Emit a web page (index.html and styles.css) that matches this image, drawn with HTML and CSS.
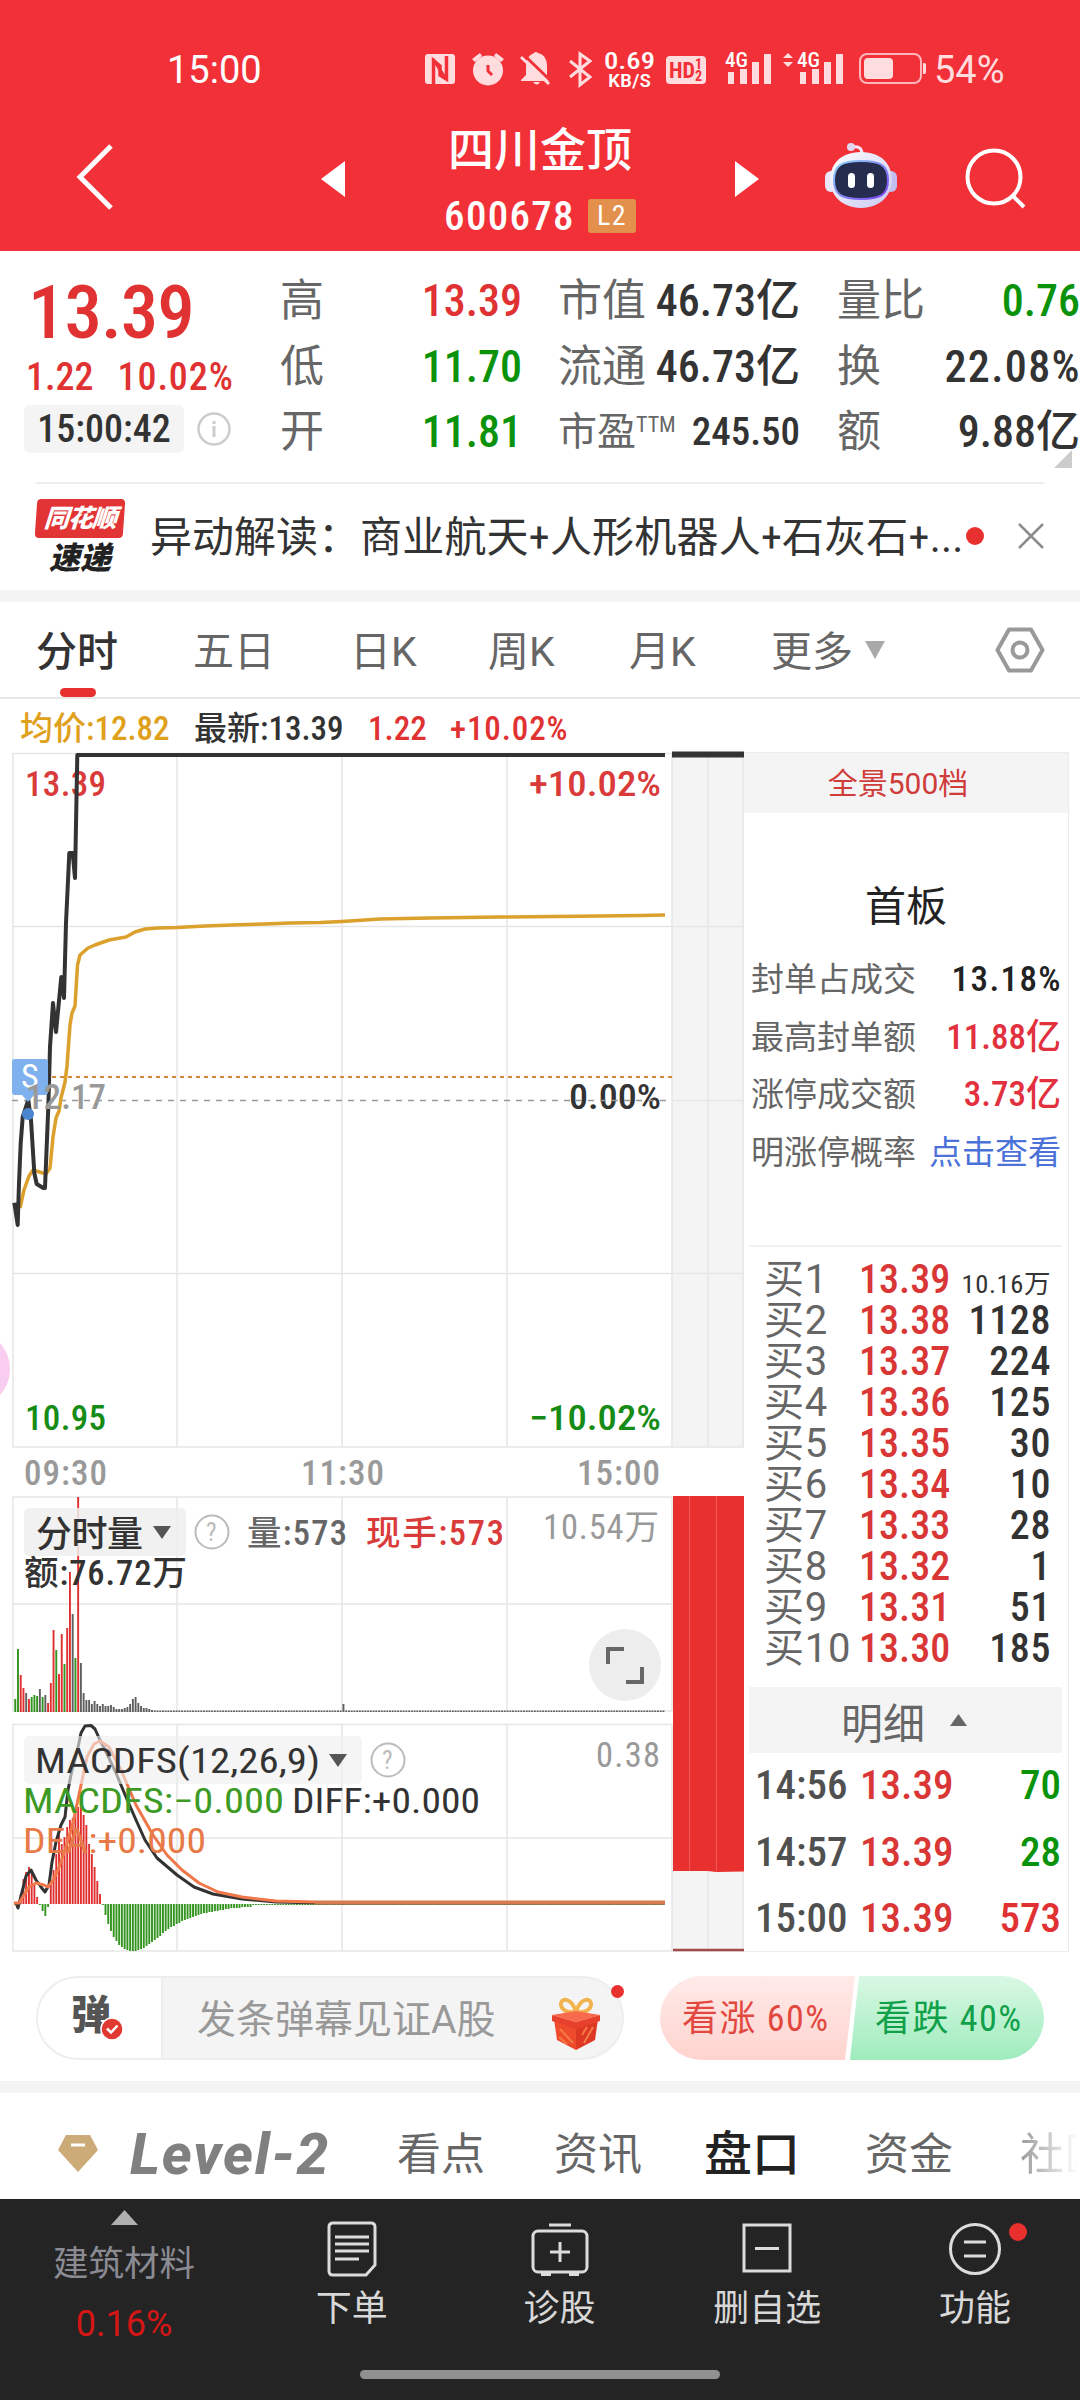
FILE: index.html
```html
<!DOCTYPE html>
<html lang="zh-CN">
<head>
    <meta charset="UTF-8">
    <meta name="viewport" content="width=device-width, initial-scale=1.0">
    <title>四川金顶 600678</title>
    <link rel="stylesheet" href="styles.css">
</head>
<body>
    <header class="header">
        <div class="status">
            <span class="status-time">15:00</span>
            <svg class="status-icons" width="504" height="40" viewBox="424 50 504 40">
                <g fill="#ffdcde">
                    <rect x="425" y="54" width="30" height="30" rx="3"/>
                    <path d="M472 59l8-6 2 3-7 6zM504 59l-8-6-2 3 7 6z"/>
                    <circle cx="488" cy="70.500" r="15"/>
                    <path d="M534 53q2-2 4 0 9 2 9 13v10l4 4v1h-30v-1l5-5v-9q0-10 8-13zM533 82h7q-3 5-7 0z"/>
                    <rect x="666" y="56" width="40" height="28" rx="4"/>
                    <path d="M728 72h6v12h-6zM740 69h7v15h-7zM752 62h7v22h-7zM764 54h7v30h-7z"/>
                    <path d="M800 72h6v12h-6zM812 69h7v15h-7zM824 62h7v22h-7zM836 54h7v30h-7z"/>
                    <path d="M783 58l5-5 5 5zM783 62l5 5 5-5z"/>
                    <rect x="864" y="58" width="29" height="21" rx="4"/>
                    <path d="M923 63h1.500q1.500 0 1.500 2v7q0 2-1.500 2h-1.500z"/>
                </g>
                <path d="M433.500 84V60.500L440 66V75L446.500 79V56" fill="none" stroke="#f23038" stroke-width="3.500"/>
                <path d="M433 59l13 20" stroke="#f23038" stroke-width="3"/>
                <path d="M488 65v6l4 4" fill="none" stroke="#f23038" stroke-width="3"/>
                <path d="M524 55l28 27" stroke="#f23038" stroke-width="3"/>
                <path d="M521 57l28 27" stroke="#ffdcde" stroke-width="3"/>
                <path d="M570 61l20 16-10 8V54l10 7-20 16" fill="none" stroke="#ffdcde" stroke-width="3"/>
                <rect x="860" y="54" width="61" height="29" rx="7" fill="none" stroke="#ffb6ba" stroke-width="2"/>
                <g class="status-text">
                    <text x="604" y="69" font-size="24" textLength="51" lengthAdjust="spacingAndGlyphs">0.69</text>
                    <text x="608" y="86.500" font-size="19" textLength="43" lengthAdjust="spacingAndGlyphs">KB/S</text>
                    <text x="725" y="67" font-size="20" textLength="23" lengthAdjust="spacingAndGlyphs">4G</text>
                    <text x="797" y="67" font-size="20" textLength="23" lengthAdjust="spacingAndGlyphs">4G</text>
                </g>
                <g class="status-text status-hd">
                    <text x="669" y="78" font-size="22" textLength="26" lengthAdjust="spacingAndGlyphs">HD</text>
                    <text x="695" y="69" font-size="14">1</text>
                    <text x="695" y="81" font-size="14">2</text>
                </g>
            </svg>
            <span class="status-battery">54%</span>
        </div>
        <div class="titlebar">
            <svg class="back" width="40" height="68" viewBox="0 0 40 68"><path d="M36 3L5 34l31 31" fill="none" stroke="#fff" stroke-width="5"/></svg>
            <svg class="prev" width="24" height="36" viewBox="0 0 24 36"><path d="M24 0v36L0 18z" fill="#fff"/></svg>
            <div class="stock">
                <h1 class="stock-name">四川金顶</h1>
                <div class="stock-code">600678 <span class="badge-l2">L2</span></div>
            </div>
            <svg class="next" width="24" height="36" viewBox="0 0 24 36"><path d="M0 0v36l24-18z" fill="#fff"/></svg>
            <svg class="robot" width="72" height="68" viewBox="0 0 72 68">
                <defs>
                    <linearGradient id="shell" x1="0" y1="0" x2="1" y2="1"><stop offset="0" stop-color="#fff"/><stop offset="1" stop-color="#c9c8f2"/></linearGradient>
                    <linearGradient id="rim" x1="0" y1="0" x2="1" y2="1"><stop offset="0" stop-color="#8fd6f5"/><stop offset="1" stop-color="#7a3ff0"/></linearGradient>
                </defs>
                <path d="M26 5q11-2 11 7" fill="none" stroke="#f3e6f6" stroke-width="3"/>
                <circle cx="26" cy="5" r="4" fill="#e3d7f0"/>
                <rect x="0" y="29" width="12" height="21" rx="6" fill="#e9e8fb"/>
                <rect x="60" y="29" width="12" height="21" rx="6" fill="#c2bff0"/>
                <path d="M36 10c22 0 31 14 31 28S56 66 36 66 5 52 5 38s9-28 31-28z" fill="url(#shell)"/>
                <path d="M36 19c19 0 27 4 27 19s-8 19-27 19S9 53 9 38s8-19 27-19z" fill="#252c4e" stroke="url(#rim)" stroke-width="2"/>
                <rect x="23" y="31" width="7" height="15" rx="3.500" fill="#fff"/>
                <rect x="42" y="31" width="7" height="15" rx="3.500" fill="#fff"/>
            </svg>
            <svg class="search" width="62" height="62" viewBox="0 0 62 62" fill="none" stroke="#fff" stroke-width="4"><circle cx="29" cy="30" r="26.500"/><path d="M48 49l11 11"/></svg>
        </div>
    </header>

    <section class="quote">
        <div class="quote-main">
            <div class="price red">13.39</div>
            <div class="change red"><span>1.22</span><span>10.02%</span></div>
            <div class="time-row">
                <span class="time-pill">15:00:42</span>
                <svg width="34" height="34" viewBox="0 0 34 34"><circle cx="17" cy="17" r="15.500" fill="none" stroke="#ccc" stroke-width="2.500"/><path d="M17 14v11M17 9v3" stroke="#ccc" stroke-width="3"/></svg>
            </div>
        </div>
        <dl class="quote-col col-price">
            <div><dt>高</dt><dd class="red">13.39</dd></div>
            <div><dt>低</dt><dd class="green">11.70</dd></div>
            <div><dt>开</dt><dd class="green">11.81</dd></div>
        </dl>
        <dl class="quote-col col-cap">
            <div><dt>市值</dt><dd>46.73亿</dd></div>
            <div><dt>流通</dt><dd>46.73亿</dd></div>
            <div class="pe"><dt>市盈<sup>TTM</sup></dt><dd>245.50</dd></div>
        </dl>
        <dl class="quote-col col-volume">
            <div><dt>量比</dt><dd class="green">0.76</dd></div>
            <div><dt>换</dt><dd class="wide">22.08%</dd></div>
            <div><dt>额</dt><dd>9.88亿</dd></div>
        </dl>
        <svg class="quote-more" width="18" height="18" viewBox="0 0 18 18"><path d="M18 0v18H0z" fill="#ccc"/></svg>
    </section>

    <section class="news">
        <div class="news-logo">
            <span class="news-brand">同花顺</span>
            <span class="news-sub">速递</span>
        </div>
        <span class="news-text">异动解读：<b>商业航天+人形机器人+石灰石+...</b></span>
        <i class="dot news-dot"></i>
        <svg class="news-close" width="26" height="26" viewBox="0 0 26 26"><path d="M1 1l24 24M25 1L1 25" stroke="#8c8c8c" stroke-width="2.500"/></svg>
    </section>

    <nav class="periods">
        <a class="period active">分时</a>
        <a class="period">五日</a>
        <a class="period">日K</a>
        <a class="period">周K</a>
        <a class="period">月K</a>
        <a class="period">更多<svg class="caret" width="22" height="18" viewBox="0 0 22 18"><path d="M1 0h20L11 18z" fill="#a9a9a9"/></svg></a>
        <svg class="hexagon" width="50" height="46" viewBox="0 0 50 46" fill="none" stroke="#999" stroke-width="4" stroke-linejoin="round"><path d="M14 2.500h22l11.500 20.500L36 43.500H14L2.500 23z"/><circle cx="25" cy="23" r="7.500"/></svg>
    </nav>

    <div class="legend">
        <span class="gold">均价:12.82</span>
        <span>最新:13.39</span>
        <span class="red">1.22</span>
        <span class="red">+10.02%</span>
    </div>

    <main class="board">
        <svg class="chart" width="744" height="1202" viewBox="0 750 744 1202">
            <!-- after-hours strip -->
            <path d="M672 753h72v694h-72zM672 1871h72v81h-72z" fill="#f4f4f4"/>
            <g stroke="#e6e6e6" stroke-width="1.500" fill="none">
                <path d="M12 753.500H744M12 926.500H744M672 1100.500H744M12 1273.500H744M12 1447H744"/>
                <path d="M13 753V1447M177 753V1447M342 753V1447M507 753V1447M672 753V1447M708 753V1447M743 753V1447"/>
                <path d="M12 1497H672M12 1604H672M12 1711H672M13 1497V1711M177 1497V1711M342 1497V1711M507 1497V1711M672 1497V1711"/>
                <path d="M12 1724.500H672M12 1838H672M12 1951H744M13 1724V1951M177 1724V1951M342 1724V1951M507 1724V1951M672 1724V1951M708 1871V1951M743 1871V1951"/>
            </g>
            <circle cx="-29" cy="1369" r="39" fill="#f9cdf0"/>

            <g class="axis">
                <text x="25" y="796" class="red" textLength="81">13.39</text>
                <text x="529" y="796" class="red" textLength="132" lengthAdjust="spacingAndGlyphs">+10.02%</text>
                <text x="569" y="1109" fill="#333" textLength="92" lengthAdjust="spacingAndGlyphs">0.00%</text>
                <text x="25" y="1430" class="green" textLength="81">10.95</text>
                <text x="529" y="1430" class="green" textLength="132" lengthAdjust="spacingAndGlyphs">−10.02%</text>
                <text x="24" y="1485" textLength="83">09:30</text>
                <text x="301" y="1485" textLength="83">11:30</text>
                <text x="577" y="1485" textLength="83">15:00</text>
            </g>

            <path d="M12 1077H672" stroke="#d8873c" stroke-width="2" stroke-dasharray="4 4"/>
            <path d="M12 1100.500H666" stroke="#999" stroke-width="1.500" stroke-dasharray="6 6"/>
            <polyline fill="none" stroke="#dca02c" stroke-width="3.500" stroke-linejoin="round" points="20,1208 24,1190 29,1176 33,1170 46,1174 50,1168 53,1137 56,1118 59,1111 61,1098 65,1082 67,1066 70,1025 72,1013 75,1006 77.500,965 80,955 88,948 95,945 109,940 126,937 135,932 145,929 158,928 177,927.500 205,926 232,925 265,924 290,923 320,922.500 342,921.500 380,919 430,918 500,917 600,916 640,915.500 665,915"/>
            <polyline fill="none" stroke="#333" stroke-width="4" stroke-linejoin="round" points="14.300,1202.700 17.700,1225 19,1183 20.700,1143 22.700,1117 28.300,1100 31,1120 34.300,1173 36.700,1184 43.300,1188 45,1188 48.300,1107 50,1047 53,1003 56,1032 61.300,977 64,998 66,923 69.300,853 72.700,853 75,878 77.300,755 665,755"/>
            <path d="M672 754.500H744" stroke="#333" stroke-width="6"/>
            <circle cx="28" cy="1114" r="6" fill="#4a86d0"/>
            <path d="M15 1059h30q3 0 3 3v30q0 3-3 3H34l-6 7-6-7H15q-3 0-3-3v-30q0-3 3-3z" fill="#7fb1ee"/>
            <text x="21" y="1088" class="mark">S</text>
            <text x="26" y="1109" class="axis" textLength="80">12.17</text>

            <g id="volume"></g>
            <path d="M673 1496h71v375.500l-27 .5-10-1h-34z" fill="#e8302f"/>
            <path d="M689.500 1496V1871M716.500 1496V1871" stroke="#ee5a58"/>
            <path d="M673 1950H744" stroke="#a04a4a" stroke-width="2.500"/>
            <rect x="24" y="1508" width="162" height="48" rx="5" fill="#eee" fill-opacity=".85"/>
            <g class="tag">
                <text x="36" y="1547" font-size="36" fill="#333" textLength="107">分时量</text>
                <path d="M153 1526h18l-9 13z" fill="#555"/>
                <circle cx="212" cy="1532" r="16.500" fill="none" stroke="#bbb" stroke-width="2"/>
                <text x="206" y="1541" class="help">?</text>
                <text x="247" y="1545" fill="#666" textLength="100">量:573</text>
                <text x="366" y="1545" class="red" textLength="138">现手:573</text>
                <text x="543" y="1539" class="scale" textLength="116">10.54万</text>
                <text x="24" y="1585" fill="#333" textLength="163">额:76.72万</text>
            </g>
            <circle cx="625" cy="1665" r="36" fill="#ededed"/>
            <path d="M608 1664v-15h16M626 1682h16v-15" fill="none" stroke="#666" stroke-width="4"/>

            <g id="macd"></g>
            <g fill="none" stroke-width="3" stroke-linejoin="round">
                <polyline stroke="#333" points="16,1903 18,1908 22,1892 26,1876 31,1870 36,1880 41,1887 45,1892 49,1885 52,1862 56,1842 61,1825 65,1817 68,1790 72,1770 77,1752 81,1733 85,1726 91,1725.500 95,1729 99,1738 107,1754 116,1773 126,1797 136,1820 145,1840 157,1858 177,1875 194,1887 213,1894 242,1899 276,1902 320,1903 665,1903"/>
                <polyline stroke="#f0774a" points="14,1903 19,1903 24,1895 29,1887 36,1883 44,1885 48,1887 53,1880 58,1870 65,1850 73,1823 80,1790 87,1757 94,1744 100,1741 109,1747 121,1770 136,1805 153,1835 167,1855 182,1870 199,1883 218,1892 242,1897 276,1901 315,1902"/>
                <path d="M315 1902.500H665" stroke="#d87a50" stroke-width="4"/>
            </g>
            <rect x="24" y="1736" width="338" height="48" rx="5" fill="#eee" fill-opacity=".6"/>
            <g class="tag tag-macd">
                <text x="35" y="1773" fill="#333" textLength="285" lengthAdjust="spacingAndGlyphs">MACDFS(12,26,9)</text>
                <path d="M329 1754h18l-9 13z" fill="#555"/>
                <circle cx="388" cy="1760" r="16.500" fill="none" stroke="#bbb" stroke-width="2"/>
                <text x="382" y="1769" class="help">?</text>
                <text x="596" y="1767" fill="#999" textLength="64">0.38</text>
                <text x="23" y="1813" fill="#3c9a25" textLength="261" lengthAdjust="spacingAndGlyphs">MACDFS:−0.000</text>
                <text x="292" y="1813" fill="#333" textLength="188" lengthAdjust="spacingAndGlyphs">DIFF:+0.000</text>
                <text x="23" y="1853" fill="#e87a48" textLength="183" lengthAdjust="spacingAndGlyphs">DEA:+0.000</text>
            </g>
        </svg>

        <aside class="depth">
            <div class="depth-head">全景500档</div>
            <div class="depth-title">首板</div>
            <div class="facts">
                <div><span>封单占成交</span><b class="wide">13.18%</b></div>
                <div><span>最高封单额</span><b class="crimson">11.88亿</b></div>
                <div><span>涨停成交额</span><b class="crimson">3.73亿</b></div>
                <div><span>明涨停概率</span><a class="link">点击查看</a></div>
            </div>
            <div class="orders">
                <div><span>买1</span><b>13.39</b><em class="small">10.16万</em></div>
                <div><span>买2</span><b>13.38</b><em>1128</em></div>
                <div><span>买3</span><b>13.37</b><em>224</em></div>
                <div><span>买4</span><b>13.36</b><em>125</em></div>
                <div><span>买5</span><b>13.35</b><em>30</em></div>
                <div><span>买6</span><b>13.34</b><em>10</em></div>
                <div><span>买7</span><b>13.33</b><em>28</em></div>
                <div><span>买8</span><b>13.32</b><em>1</em></div>
                <div><span>买9</span><b>13.31</b><em>51</em></div>
                <div><span>买10</span><b>13.30</b><em>185</em></div>
            </div>
            <div class="detail-head">明细<svg width="17" height="12" viewBox="0 0 17 12"><path d="M8.500 0L17 12H0z" fill="#666"/></svg></div>
            <div class="ticks">
                <div><span>14:56</span><b>13.39</b><em class="green">70</em></div>
                <div><span>14:57</span><b>13.39</b><em class="green">28</em></div>
                <div><span>15:00</span><b>13.39</b><em class="red">573</em></div>
            </div>
        </aside>
    </main>

    <section class="social">
        <div class="danmu">
            <div class="danmu-toggle">
                <span>弹</span>
                <svg class="danmu-check" width="24" height="24" viewBox="0 0 24 24"><circle cx="12" cy="12" r="11" fill="#e0392f" stroke="#fff" stroke-width="1.500"/><path d="M7 11.500l4 4 6.500-7" fill="none" stroke="#fff" stroke-width="2.500"/></svg>
            </div>
            <div class="danmu-input">发条弹幕见证A股</div>
            <svg class="gift" width="50" height="53" viewBox="0 0 50 53">
                <path d="M25 15C20-1 9 1 10 8c1 6 8 8 15 7 7 1 14-1 15-7 1-7-10-9-15 7z" fill="none" stroke="#f2b24c" stroke-width="4"/>
                <path d="M3 22l22 8v23L6 43z" fill="#ee4a2c"/>
                <path d="M47 22l-22 8v23l19-10z" fill="#dc3823"/>
                <path d="M1 18l24-4 24 4-24 7z" fill="#f76a4c"/>
                <path d="M1 18l24 7 24-7v6l-24 8-24-8z" fill="#e8412b"/>
                <path d="M9 32l13 14M8 40l8 7M33 46l9-16M31 38l5-8" stroke="#f57a45" stroke-width="2"/>
            </svg>
            <i class="dot danmu-dot"></i>
        </div>
        <div class="vote">
            <div class="vote-up">看涨 60%</div>
            <div class="vote-down">看跌 40%</div>
        </div>
    </section>

    <nav class="tabs">
        <svg class="gem" width="42" height="37" viewBox="0 0 42 37"><path d="M9 0h24l8 15-20 22L1 15z" fill="#cdab78"/><path d="M14 10h14" stroke="#fff" stroke-width="3"/></svg>
        <a class="level2">Level-2</a>
        <a class="tab">看点</a>
        <a class="tab">资讯</a>
        <a class="tab active">盘口</a>
        <a class="tab">资金</a>
        <a class="tab faded">社区</a>
    </nav>

    <footer class="bottom">
        <div class="bottom-nav">
            <div class="sector">
                <svg width="27" height="15" viewBox="0 0 27 15"><path d="M13.500 0L27 15H0z" fill="#b0b0b0"/></svg>
                <span class="sector-name">建筑材料</span>
                <span class="sector-change">0.16%</span>
            </div>
            <div class="action">
                <svg width="60" height="56" viewBox="0 0 60 56" fill="none" stroke="#dcdcdc" stroke-width="3"><path d="M11 2h38q4 0 4 4v38l-9 10H11q-4 0-4-4V6q0-4 4-4z"/><path d="M13 16h34M13 23h34M13 30h34M13 38h24"/></svg>
                <span>下单</span>
            </div>
            <div class="action">
                <svg width="60" height="56" viewBox="0 0 60 56" fill="none" stroke="#dcdcdc" stroke-width="3"><path d="M19 4h22"/><rect x="3" y="10" width="54" height="41" rx="5"/><path d="M30 21v20M20 31h20M11 53.500h10M39 53.500h10"/></svg>
                <span>诊股</span>
            </div>
            <div class="action">
                <svg width="60" height="56" viewBox="0 0 60 56" fill="none" stroke="#dcdcdc" stroke-width="3"><rect x="7" y="4" width="46" height="46"/><path d="M18 27.500h24"/></svg>
                <span>删自选</span>
            </div>
            <div class="action">
                <svg width="60" height="56" viewBox="0 0 60 56" fill="none" stroke="#dcdcdc" stroke-width="3"><circle cx="30" cy="28" r="24.500"/><path d="M19 21h22M19 35h22"/></svg>
                <span>功能</span>
                <i class="dot action-dot"></i>
            </div>
        </div>
        <div class="home-bar"></div>
    </footer>

    <script src="chart.js"></script>
</body>
</html>
```
FILE: styles.css
```css
* {
    box-sizing: border-box;
}
body {
    margin: 0;
    width: 1080px;
    height: 2400px;
    overflow: hidden;
    background: #fff;
    color: #333;
    font-family: Roboto, "Noto Sans CJK SC", sans-serif;
    font-stretch: 75%;
}
svg {
    display: block;
    flex: none;
}
h1, dl, dd {
    margin: 0;
}
i, em {
    font-style: normal;
}
.red {
    color: #e03232;
    fill: #d93a3a;
}
.green {
    color: #0a930a;
    fill: #168c16;
}
.dot {
    display: block;
    width: 18px;
    height: 18px;
    border-radius: 50%;
    background: #e8302f;
}

/* header */
.header {
    height: 251px;
    background: #f23038;
    color: #fff;
}
.status {
    display: flex;
    align-items: center;
    height: 100px;
    padding: 40px 0 0 167px;
    font-size: 38px;
    line-height: 60px;
    font-stretch: 100%;
}
.status-time {
    width: 257px;
}
.status-battery {
    margin-left: 6px;
    color: #ffdcde;
}
.status-icons {
    font-stretch: 75%;
}
.status-text {
    fill: #fff;
    font-weight: 500;
}
.status-hd {
    fill: #f23038;
    font-weight: 700;
}
.titlebar {
    display: flex;
    align-items: flex-start;
    height: 150px;
    padding: 23px 0 0 75px;
}
.back {
    margin-top: 20px;
}
.prev {
    margin: 38px 0 0 206px;
}
.stock {
    width: 390px;
    text-align: center;
}
.stock-name {
    font-size: 46px;
    font-weight: 500;
    line-height: 54px;
}
.stock-code {
    display: flex;
    justify-content: center;
    align-items: center;
    height: 48px;
    margin-top: 15px;
    font-size: 41px;
    font-weight: 500;
    letter-spacing: 1.3px;
}
.badge-l2 {
    width: 48px;
    height: 34px;
    margin-left: 13px;
    border-radius: 3px;
    background: #e2904c;
    font-size: 28px;
    font-weight: 400;
    line-height: 34px;
}
.next {
    margin-top: 38px;
}
.robot {
    margin: 19px 0 0 66px;
}
.search {
    margin: 24px 0 0 68px;
}

/* quote */
.quote {
    position: relative;
    display: flex;
    height: 231px;
    padding-top: 18px;
}
.quote-main {
    width: 280px;
    padding-left: 24px;
}
.price {
    height: 88px;
    padding-left: 4px;
    font-size: 75px;
    font-weight: 500;
    line-height: 86px;
    letter-spacing: -1px;
}
.change {
    display: flex;
    gap: 24px;
    padding-left: 2px;
    font-size: 38px;
    font-weight: 500;
    line-height: 41px;
}
.change span + span {
    letter-spacing: 0.9px;
}
.time-row {
    display: flex;
    align-items: center;
    gap: 13px;
    margin-top: 7px;
}
.time-pill {
    width: 160px;
    height: 48px;
    border-radius: 6px;
    background: #f4f4f4;
    font-size: 38px;
    font-weight: 500;
    line-height: 48px;
    text-align: center;
}
.quote-col > div {
    display: flex;
    justify-content: space-between;
    height: 65.5px;
    line-height: 65px;
    font-size: 44px;
}
.quote-col dt {
    color: #666;
}
.quote-col dd {
    font-weight: 500;
    white-space: nowrap;
}
.quote-col .wide {
    letter-spacing: 1.4px;
    margin-right: -1px;
}
.col-price {
    width: 242px;
}
.col-cap {
    width: 242px;
    margin-left: 36px;
}
.col-volume {
    width: 243px;
    margin-left: 37px;
}
.quote-col .pe {
    font-size: 39px;
}
.pe sup {
    font-size: 22px;
    line-height: 0;
    vertical-align: 13px;
}
.quote-more {
    position: absolute;
    right: 8px;
    bottom: 14px;
}

/* news */
.news {
    display: flex;
    align-items: center;
    height: 108px;
    margin: 0 36px;
    border-top: 2px solid #ededed;
}
.news-logo {
    width: 88px;
    height: 76px;
    margin-right: 26px;
    text-align: center;
    font-weight: 900;
    font-style: italic;
}
.news-brand {
    display: block;
    height: 39px;
    border-radius: 4px;
    background: #e23434;
    color: #fff;
    font-size: 25px;
    line-height: 40px;
    letter-spacing: -1px;
    transform: skewX(-4deg);
}
.news-sub {
    display: block;
    color: #222;
    font-size: 31px;
    line-height: 42px;
}
.news-text {
    width: 816px;
    font-size: 42px;
    line-height: 61px;
    white-space: nowrap;
}
.news-text b {
    font-weight: 400;
    letter-spacing: 0.2px;
}
.news-dot {
    margin-bottom: 2px;
}
.news-close {
    margin: 0 0 2px 34px;
}

/* period tabs */
.periods {
    display: flex;
    align-items: center;
    height: 109px;
    padding-left: 36px;
    border-top: 12px solid #f4f4f4;
    border-bottom: 2px solid #e8e8e8;
    color: #666;
    font-size: 41px;
}
.period {
    position: relative;
    display: flex;
    align-items: center;
    width: 157px;
    height: 95px;
    padding-top: 5px;
    line-height: 90px;
}
.period.active {
    color: #333;
    font-weight: 500;
}
.period.active::after {
    content: "";
    position: absolute;
    left: 24px;
    bottom: 0;
    width: 36px;
    height: 9px;
    border-radius: 5px;
    background: #e8302f;
}
.period:nth-child(3), .period:nth-child(4), .period:nth-child(5) {
    font-stretch: 100%;
}
.period:nth-child(3) {
    width: 138px;
}
.period:nth-child(4) {
    width: 141px;
}
.period:nth-child(5) {
    width: 142px;
}
.period:nth-child(6) {
    width: 224px;
}
.caret {
    margin: -4px 0 0 11px;
}
.legend {
    display: flex;
    height: 51px;
    padding-left: 20px;
    font-size: 33px;
    font-weight: 500;
    line-height: 59px;
}
.legend span {
    width: 174px;
}
.legend span:nth-child(3) {
    width: 82px;
}
.legend span:nth-child(4) {
    letter-spacing: 0.9px;
}
.gold {
    color: #dfa01c;
}

/* chart */
.board {
    display: flex;
    height: 1202px;
}
.axis {
    fill: #999;
    font-size: 35px;
    font-weight: 500;
}
.mark {
    fill: #fff;
    font-size: 34px;
}
.tag {
    font-size: 34.5px;
    font-weight: 500;
}
.tag-macd {
    font-weight: 400;
}
.help {
    fill: #bbb;
    font-size: 25px;
    font-weight: 400;
}
.scale {
    fill: #999;
    font-weight: 400;
}
.bar-up {
    fill: #e02f2f;
}
.bar-down {
    fill: #33941f;
}
.bar-flat {
    fill: #5f5f5f;
}

/* order book */
.depth {
    width: 325px;
    margin-top: 2px;
    border: 1px solid #ececec;
    border-left: 0;
}
.depth-head {
    height: 60px;
    padding-right: 16px;
    background: #f4f4f4;
    color: #d03c3a;
    font-size: 30px;
    font-stretch: 100%;
    line-height: 61px;
    text-align: center;
}
.depth-title {
    padding-top: 64px;
    color: #222;
    font-size: 41px;
    line-height: 60px;
    text-align: center;
}
.facts {
    height: 308px;
    padding: 14px 7px 0;
}
.facts div {
    display: flex;
    justify-content: space-between;
    color: #666;
    font-size: 33px;
    line-height: 57.6px;
    white-space: nowrap;
}
.facts b {
    color: #222;
    font-size: 35px;
    font-weight: 500;
}
.facts .wide {
    margin-right: -1px;
    letter-spacing: 1.4px;
}
.facts .crimson {
    color: #e2303e;
}
.facts .link {
    color: #4a72d8;
}
.orders {
    margin: 0 6px 0 5px;
    padding-top: 12px;
    height: 442px;
    border-top: 2px solid #f2f2f2;
}
.orders div, .ticks div {
    display: flex;
    height: 41px;
    padding: 0 11px 0 15px;
    font-size: 40px;
    font-weight: 500;
    line-height: 41px;
}
.orders span {
    width: 95px;
    color: #666;
    font-weight: 400;
    font-stretch: 100%;
    letter-spacing: 0.8px;
    white-space: nowrap;
}
.orders b, .ticks b {
    font-weight: 500;
    color: #d93636;
}
.orders em, .ticks em {
    flex: 1;
    text-align: right;
}
.orders em {
    letter-spacing: 0.6px;
}
.orders .small {
    font-size: 26.5px;
    font-weight: 400;
    line-height: 50px;
}
.detail-head {
    display: flex;
    align-items: center;
    height: 66px;
    margin: 0 6px 0 5px;
    padding-left: 92px;
    background: #f4f4f4;
    color: #666;
    font-size: 42px;
}
.detail-head svg {
    margin-left: 25px;
}
.ticks div {
    height: 66.7px;
    padding: 0 7px 0 11px;
    font-size: 41px;
    line-height: 65px;
}
.ticks span {
    width: 105px;
    color: #505050;
}

/* comment box and vote */
.social {
    display: flex;
    justify-content: space-between;
    height: 141px;
    padding: 24px 36px 0;
    border-bottom: 12px solid #f4f4f4;
}
.danmu {
    position: relative;
    display: flex;
    align-items: center;
    width: 588px;
    height: 84px;
    border: 2px solid #eee;
    border-radius: 42px;
    background: linear-gradient(90deg, #fff 123px, #eee 123px, #eee 125px, #f4f4f4 125px);
}
.danmu-toggle {
    position: relative;
    width: 124px;
    padding: 0 0 4px 33px;
    color: #555;
    font-size: 40px;
    font-weight: 900;
    line-height: 76px;
}
.danmu-check {
    position: absolute;
    left: 62px;
    top: 39px;
}
.danmu-input {
    width: 352px;
    padding: 4px 0 0 35px;
    color: #999;
    font-size: 39px;
    line-height: 80px;
    font-stretch: 100%;
    white-space: nowrap;
}
.gift {
    margin: 10px 0 0 37px;
}
.danmu-dot {
    position: absolute;
    right: -2px;
    top: 7px;
    width: 13px;
    height: 13px;
}
.vote {
    display: flex;
    width: 384px;
    height: 84px;
    border-radius: 42px;
    overflow: hidden;
    font-size: 36px;
    line-height: 86px;
    letter-spacing: 1.5px;
    white-space: pre;
}
.vote-up {
    width: 195px;
    padding-left: 22px;
    background: linear-gradient(#ffebe9, #fed3ce);
    color: #e2483f;
    clip-path: polygon(0 0, 100% 0, 185px 100%, 0 100%);
}
.vote-down {
    width: 194px;
    margin-left: -5px;
    padding-left: 25px;
    background: linear-gradient(#d9f8e4, #9fecbd);
    color: #11a04a;
    clip-path: polygon(9px 0, 100% 0, 100% 100%, 0 100%);
}

/* section tabs */
.tabs {
    display: flex;
    align-items: center;
    height: 106px;
    padding: 18px 0 0 57px;
    overflow: hidden;
    color: #666;
    font-size: 44px;
    line-height: 86px;
    white-space: nowrap;
}
.gem {
    margin-bottom: 4px;
}
.level2 {
    width: 266px;
    margin-left: 31px;
    color: #808080;
    font-size: 57px;
    font-style: italic;
    font-stretch: 100%;
    font-weight: 800;
    line-height: 82px;
    letter-spacing: 1.8px;
}
.tab {
    flex: none;
    width: 157px;
}
.tab:nth-child(3) {
    margin-left: 1px;
}
.tab:nth-child(4) {
    width: 150px;
}
.tab.active {
    width: 161px;
    color: #222;
    font-size: 48px;
    font-weight: 500;
}
.tab.faded {
    width: 60px;
    margin-left: -2px;
    background: linear-gradient(90deg, #999, #fff 58px);
    background-clip: text;
    -webkit-background-clip: text;
    color: transparent;
    overflow: hidden;
}

/* bottom bar */
.bottom {
    height: 201px;
    background: #242424;
}
.bottom-nav {
    display: flex;
    height: 171px;
    padding-left: 14px;
}
.sector {
    display: flex;
    flex-direction: column;
    align-items: center;
    width: 220px;
    padding-top: 11px;
    color: #8b8b94;
    font-size: 35.5px;
}
.sector-name {
    margin-top: 18px;
    line-height: 42px;
}
.sector-change {
    margin-top: 19px;
    color: #d51616;
    font-size: 36px;
    font-stretch: 100%;
    line-height: 40px;
}
.action {
    position: relative;
    display: flex;
    flex-direction: column;
    align-items: center;
    width: 207.7px;
    padding-top: 22px;
    color: #d8d8d8;
    font-size: 36px;
}
.action span {
    margin-top: 11px;
    line-height: 42px;
}
.action:nth-child(2) {
    margin-left: 14px;
}
.action-dot {
    position: absolute;
    left: 138px;
    top: 24px;
}
.home-bar {
    width: 360px;
    height: 9px;
    margin: 0 auto;
    border-radius: 5px;
    background: #909090;
}
```
FILE: chart.js
```javascript
const STEP = 2.735;
const START = 14.3;

function addBar(group, index, y, height, type) {
    const bar = document.createElementNS('http://www.w3.org/2000/svg', 'rect');
    bar.setAttribute('x', START + index * STEP);
    bar.setAttribute('y', y);
    bar.setAttribute('width', 1.9);
    bar.setAttribute('height', height);
    bar.setAttribute('class', 'bar-' + type);
    group.appendChild(bar);
}

// minute volume, u = up, d = down, f = flat
const volume = 'd13 d63 u37 u24 f19 u13 d15 d17 d16 f23 d15 f17 u9 u29 u82 d62 u38 u78 d48 u84 u140 f98 d54 u215 f49 f19 f12 f12 f8 f11 f8 f6 f8 f6 f6 f7 f5 f3 f3 f3 f4 f5 f8 f13 f15 f9 f6 f4 f4 f3 f2'.split(' ');
const types = { u: 'up', d: 'down', f: 'flat' };
const volumeGroup = document.getElementById('volume');
for (let i = 0; i < 238; i++) {
    const item = volume[i] || (i === 120 ? 'f8' : 'f1.5');
    const height = Number(item.slice(1));
    addBar(volumeGroup, i, 1712 - height, height, types[item[0]]);
}

const macd = [-1, -5, 10, 25, 32, 37, 32, 21, 7, -1, -7, -12, -3, 24, 34, 50, 70, 60, 67, 77, 84, 86, 90, 97, 104, 89, 79, 60, 50, 37, 23, 10, -1, -11, -20, -27, -33, -37, -41, -43, -45, -46, -47, -47, -47, -46, -45, -44, -42, -40, -38, -36, -34, -32, -29, -27, -25, -23, -22, -20, -19, -17, -16, -15, -14, -13, -12, -11, -10, -9, -9, -8, -8, -7, -7, -6, -6, -5, -5, -4, -4, -4, -4, -3, -3, -3, -3];
const macdGroup = document.getElementById('macd');
for (let i = 0; i < 238; i++) {
    const value = i < macd.length ? macd[i] : -1;
    const height = Math.abs(value);
    addBar(macdGroup, i, value > 0 ? 1904 - height : 1904, height, value > 0 ? 'up' : 'down');
}
```
